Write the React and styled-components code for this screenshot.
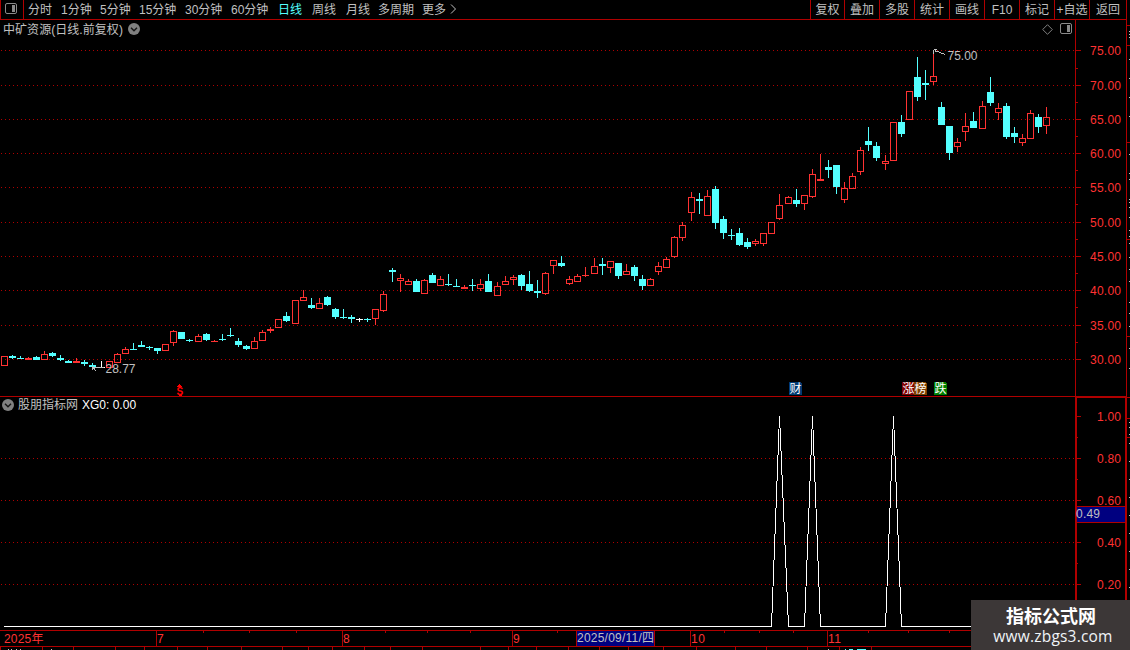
import React from 'react';
import styled, { createGlobalStyle } from 'styled-components';

const LINE = '#b00000';
const RED = '#ff3232';
const CYAN = '#54ffff';
const GREY = '#c0c0c0';
const FONT = '"Liberation Sans", "Noto Sans CJK SC", sans-serif';

const GlobalStyle = createGlobalStyle`
  * {
    box-sizing: border-box;
  }
  body {
    margin: 0;
    background: #000;
    overflow: hidden;
  }
`;

const Screen = styled.div`
  position: relative;
  display: flex;
  width: 1130px;
  height: 650px;
  background: #000;
  color: ${GREY};
  font-family: ${FONT};
  font-size: 12px;
  line-height: 18px;
  white-space: nowrap;
  overflow: hidden;
  svg {
    display: block;
    flex: none;
  }
`;
const Workspace = styled.div`
  display: flex;
  flex-direction: column;
  width: 1127px;
  border-right: 1px solid ${LINE};
`;
const TopBar = styled.div`
  display: flex;
  height: 20px;
  border-left: 1px solid ${LINE};
  border-bottom: 1px solid ${LINE};
`;
const PanelToggle = styled.div`
  width: 23px;
  padding: 3px 0 0 4px;
  border-right: 1px solid ${LINE};
`;
const Periods = styled.div`
  display: flex;
  flex: 1;
  padding: 1px 0 0 4px;
`;
const Period = styled.div`
  width: ${props => props.$width}px;
  color: ${props => (props.$active ? CYAN : GREY)};
`;
const Tools = styled.div`
  display: flex;
`;
const Tool = styled.div`
  width: ${props => props.$width}px;
  padding-top: 1px;
  border-left: 1px solid ${LINE};
  text-align: center;
`;
const Pane = styled.div`
  display: flex;
  height: ${props => props.$height}px;
`;
const Plot = styled.div`
  width: 1075px;
`;
const PaneHeader = styled.div`
  display: flex;
  align-items: center;
  height: 18px;
  padding: 0 3px ${props => props.$bottom || 0}px ${props => props.$left}px;
  gap: ${props => props.$gap}px;
`;
const StockName = styled.span`
  padding-top: 2px;
  letter-spacing: 0.05px;
`;
const HeaderIcons = styled.div`
  display: flex;
  align-items: center;
  gap: 7px;
  margin-left: auto;
`;
const Indicator = styled(Pane)`
  border-top: 1px solid ${LINE};
`;
const Value = styled.span`
  color: #fff;
`;
const Watermark = styled.div`
  position: absolute;
  right: 0;
  bottom: 0;
  width: 159px;
  height: 50px;
  padding-top: 4px;
  background: #3c3737;
  color: #fff;
  text-align: center;
`;
const SiteName = styled.div`
  padding-left: 1px;
  font: bold 18px/22px "Noto Sans CJK SC", sans-serif;
`;
const SiteUrl = styled.div`
  padding-left: 5px;
  color: #f0f4f8;
  font: 15.5px/20px "Open Sans", sans-serif;
  letter-spacing: 0.2px;
`;

const periods = [
  ['分时', 33], ['1分钟', 39], ['5分钟', 39], ['15分钟', 46], ['30分钟', 46],
  ['60分钟', 47], ['日线', 34], ['周线', 34], ['月线', 32], ['多周期', 44], ['更多', 28],
];
const tools = [
  ['复权', 34], ['叠加', 35], ['多股', 35], ['统计', 35], ['画线', 35],
  ['F10', 35], ['标记', 35], ['+自选', 35], ['返回', 37],
];

// x, high, body top, body bottom, low, type
// r: hollow red, f: filled red, c: filled cyan, w: white
const candles = [
  [4, 356, 356, 366, 366, 'r'], [12, 355, 356, 358, 359, 'c'], [20, 356, 358, 359, 359, 'c'],
  [28, 357, 358, 360, 360, 'f'], [36, 356, 357, 360, 360, 'c'], [44, 351, 354, 360, 360, 'r'],
  [52, 352, 353, 356, 357, 'c'], [60, 355, 358, 360, 361, 'c'], [68, 360, 361, 363, 363, 'c'],
  [76, 358, 361, 363, 363, 'f'], [84, 360, 362, 364, 366, 'c'], [92, 363, 365, 367, 370, 'c'],
  [101, 361, 367, 368, 368, 'w'], [109, 361, 361, 368, 368, 'r'], [117, 353, 354, 363, 363, 'r'],
  [125, 347, 349, 354, 354, 'r'], [133, 343, 349, 350, 350, 'c'], [141, 341, 345, 347, 347, 'c'],
  [149, 346, 347, 348, 350, 'c'], [157, 348, 348, 351, 354, 'c'], [165, 344, 344, 351, 351, 'r'],
  [173, 330, 331, 343, 346, 'r'], [181, 332, 332, 339, 339, 'c'], [189, 339, 340, 341, 342, 'c'],
  [198, 334, 336, 342, 342, 'r'], [206, 333, 334, 340, 341, 'c'], [214, 340, 341, 342, 342, 'f'],
  [222, 334, 339, 340, 341, 'c'], [230, 328, 335, 336, 337, 'c'], [238, 338, 341, 345, 347, 'c'],
  [246, 345, 346, 349, 350, 'c'], [254, 337, 341, 349, 349, 'r'], [262, 330, 332, 341, 341, 'r'],
  [270, 327, 329, 331, 333, 'f'], [278, 319, 319, 328, 328, 'r'], [286, 312, 316, 321, 322, 'c'],
  [295, 300, 300, 324, 324, 'r'], [303, 290, 297, 301, 301, 'r'], [311, 298, 305, 308, 309, 'c'],
  [319, 298, 303, 309, 309, 'r'], [327, 296, 297, 305, 306, 'c'], [335, 308, 309, 317, 319, 'c'],
  [343, 309, 317, 318, 319, 'c'], [351, 315, 317, 319, 323, 'c'], [359, 318, 319, 320, 322, 'w'],
  [367, 318, 319, 320, 322, 'c'], [375, 309, 309, 319, 325, 'r'], [383, 291, 294, 311, 312, 'r'],
  [392, 268, 270, 272, 282, 'c'], [400, 274, 278, 281, 292, 'r'], [408, 279, 281, 285, 285, 'r'],
  [416, 279, 281, 292, 292, 'c'], [424, 279, 280, 294, 294, 'r'], [432, 273, 275, 283, 283, 'c'],
  [440, 276, 279, 286, 286, 'r'], [448, 274, 284, 285, 286, 'c'], [456, 279, 286, 287, 287, 'c'],
  [464, 285, 287, 289, 289, 'f'], [472, 279, 285, 286, 291, 'c'], [480, 279, 284, 289, 291, 'r'],
  [488, 274, 281, 292, 292, 'c'], [497, 282, 286, 296, 296, 'r'], [505, 276, 281, 285, 285, 'r'],
  [513, 275, 277, 280, 285, 'r'], [521, 274, 275, 286, 290, 'c'], [529, 271, 284, 291, 292, 'c'],
  [537, 280, 291, 293, 298, 'c'], [545, 272, 273, 294, 295, 'r'], [553, 260, 260, 266, 274, 'r'],
  [561, 256, 263, 266, 267, 'c'], [569, 276, 279, 284, 285, 'r'], [577, 274, 276, 282, 282, 'r'],
  [585, 267, 275, 276, 277, 'f'], [594, 258, 266, 274, 274, 'r'], [602, 258, 264, 266, 275, 'c'],
  [610, 261, 261, 268, 273, 'r'], [618, 263, 263, 276, 279, 'c'], [626, 264, 271, 275, 275, 'r'],
  [634, 265, 267, 276, 281, 'c'], [642, 275, 279, 286, 290, 'c'], [650, 278, 279, 286, 286, 'r'],
  [658, 262, 266, 272, 275, 'r'], [666, 257, 259, 268, 268, 'r'], [674, 236, 237, 257, 258, 'r'],
  [682, 222, 225, 238, 241, 'r'], [691, 192, 197, 213, 221, 'r'], [699, 193, 199, 201, 214, 'c'],
  [707, 190, 196, 216, 216, 'r'], [715, 186, 189, 223, 229, 'c'], [723, 216, 219, 233, 239, 'c'],
  [731, 229, 235, 236, 240, 'c'], [739, 228, 233, 245, 246, 'c'], [747, 238, 242, 247, 249, 'c'],
  [755, 239, 241, 244, 246, 'r'], [763, 233, 233, 244, 246, 'r'], [771, 222, 222, 234, 234, 'r'],
  [779, 194, 205, 219, 220, 'r'], [788, 196, 197, 204, 204, 'r'], [796, 189, 200, 204, 207, 'c'],
  [804, 195, 195, 204, 210, 'r'], [812, 169, 174, 197, 198, 'r'], [820, 154, 179, 181, 181, 'f'],
  [828, 160, 167, 170, 178, 'c'], [836, 165, 165, 187, 194, 'c'], [844, 182, 188, 200, 203, 'r'],
  [852, 173, 176, 189, 189, 'r'], [860, 147, 150, 172, 175, 'r'], [868, 127, 141, 145, 151, 'c'],
  [876, 142, 146, 158, 161, 'c'], [885, 155, 161, 164, 170, 'r'], [893, 122, 122, 161, 161, 'r'],
  [901, 115, 122, 134, 137, 'c'], [909, 91, 91, 120, 120, 'r'], [917, 57, 77, 97, 101, 'c'],
  [925, 70, 83, 85, 100, 'c'], [933, 50, 76, 82, 85, 'r'], [941, 102, 107, 125, 125, 'c'],
  [949, 126, 126, 153, 160, 'c'], [957, 138, 142, 147, 152, 'r'], [965, 113, 126, 132, 141, 'r'],
  [973, 112, 121, 128, 128, 'c'], [982, 101, 106, 129, 129, 'r'], [990, 77, 92, 103, 106, 'c'],
  [998, 103, 108, 113, 120, 'r'], [1006, 103, 106, 137, 139, 'c'], [1014, 127, 133, 137, 143, 'c'],
  [1022, 134, 138, 143, 146, 'r'], [1030, 110, 113, 139, 139, 'r'], [1038, 114, 117, 127, 133, 'c'],
  [1046, 107, 117, 126, 134, 'r'],
];

const priceTicks = [
  ['75.00', 50], ['70.00', 85], ['65.00', 119], ['60.00', 153], ['55.00', 187],
  ['50.00', 222], ['45.00', 256], ['40.00', 290], ['35.00', 325], ['30.00', 359],
];
const valueTicks = [['1.00', 416], ['0.80', 458], ['0.60', 500], ['0.40', 542], ['0.20', 584]];
const badges = [
  ['财', 789, '#003a72'], ['涨', 902, '#800000'], ['榜', 914, '#804000'], ['跌', 934, '#008000'],
];
const months = [['7', 156], ['8', 342], ['9', 512], ['10', 690], ['11', 827]];
const weekTicks = [203, 249, 296, 385, 427, 470, 557, 724, 759, 793, 868, 908, 949];
const statusCells = [
  0, 42, 73, 115, 144, 177, 207, 241, 282, 308, 332, 364, 390, 422, 480, 508, 536, 568,
  599, 628, 663, 696, 735, 766, 807, 839, 871,
];
const edgeRed = [25, 45, 142, 239, 336, 397, 418, 437];
const edgeWhite = [
  31, 34, 37, 59, 78, 97, 116, 154, 173, 179, 199, 202, 207, 217, 230, 236, 243, 257, 269,
  281, 302, 313, 326, 348, 368, 422, 427, 434, 443, 461, 479, 497, 515, 533, 551, 569, 587,
];

const ToggleIcon = () => (
  <svg width="12" height="12" viewBox="0 0 12 12">
    <rect x="0.5" y="0.5" width="11" height="10" rx="1.5" fill="none" stroke="#8a8a8a" />
    <rect x="7" y="2" width="3" height="7" fill="#8a8a8a" />
  </svg>
);

const DropIcon = () => (
  <svg width="12" height="12" viewBox="0 0 12 12">
    <circle cx="6" cy="6" r="6" fill="#808080" />
    <path d="M3 4.7 L6 7.7 L9 4.7" fill="none" stroke="#141414" strokeWidth="1.4" />
  </svg>
);

const GridLine = ({ y }) => (
  <path d={`M1 ${y + 0.5}H1075`} stroke={LINE} strokeDasharray="1 3" />
);

const Candle = ({ data }) => {
  const [x, high, top, bottom, low, type] = data;
  const color = type === 'c' ? CYAN : type === 'w' ? '#fff' : RED;
  const hollow = type === 'r';
  return (
    <g>
      <rect x={x} y={high} width="1" height={top - high} fill={color} />
      <rect x={x} y={bottom} width="1" height={low - bottom} fill={color} />
      {hollow
        ? <rect x={x - 2.5} y={top + 0.5} width="6" height={bottom - top - 1} fill="none" stroke={color} />
        : <rect x={x - 3} y={top} width="7" height={bottom - top} fill={color} />}
    </g>
  );
};

const PricePlot = () => (
  <svg width="1075" height="358" viewBox="0 38 1075 358" shapeRendering="crispEdges">
    {priceTicks.map(([label, y]) => <GridLine key={label} y={y} />)}
    {candles.map(c => <Candle key={c[0]} data={c} />)}
    <g fill="none" stroke={GREY}>
      <path d="M92 367.5H104M92.5 366V370M93 368.5H95M94.5 369V370M95.5 370V371" />
      <path d="M934 49.5H937M933.5 50V54M935 50.5L945 54.5M934.5 51.5H937" />
    </g>
    <g fill={GREY} fontSize="12">
      <text x="105.5" y="373" textLength="30">28.77</text>
      <text x="947.5" y="60" textLength="30">75.00</text>
    </g>
    <g fill="#f00">
      <path d="M179 384h1v1h1v1h1v1h-5v-1h1v-1h1z" />
      <text x="176.5" y="395" fontSize="10" fontWeight="bold">S</text>
      <rect x="179" y="387" width="2" height="1" />
      <rect x="179" y="395" width="3" height="1" />
    </g>
    {badges.map(([label, x, color]) => (
      <g key={label}>
        <path d={`M${x} 382h11l2 2v11h-13z`} fill={color} />
        <text x={x + 0.5} y="393" fontSize="12" fill="#fff">{label}</text>
      </g>
    ))}
  </svg>
);

const PriceAxis = () => (
  <svg width="51" height="376" viewBox="1075 20 51 376" shapeRendering="crispEdges">
    <rect x="1075" y="20" width="1" height="376" fill={LINE} />
    {priceTicks.map(([label, y], i) => (
      <g key={label}>
        <rect x="1076" y={y} width="5" height="1" fill={LINE} />
        {i < 9 && <rect x="1076" y={y + (i === 0 ? 18 : 17)} width="2" height="1" fill={LINE} />}
        <text x="1090" y={y + 5} fontSize="12" fill={RED} textLength="31">{label}</text>
      </g>
    ))}
  </svg>
);

const SignalPlot = () => (
  <svg width="1075" height="215" viewBox="0 415 1075 215" shapeRendering="crispEdges">
    {valueTicks.slice(1).map(([label, y]) => <GridLine key={label} y={y} />)}
    <path
      d="M4 626.5H771.5L779.5 416L788.5 626.5H804.5L812.5 416L820.5 626.5H885.5L893.5 416L901.5 626.5H1047"
      fill="none"
      stroke="#fff"
    />
  </svg>
);

const SignalAxis = () => (
  <svg width="51" height="233" viewBox="1075 397 51 233" shapeRendering="crispEdges">
    <path d="M1075 397h51v233h-1v-232h-48v232h-2z" fill={LINE} />
    {valueTicks.map(([label, y]) => (
      <g key={label}>
        <rect x="1077" y={y} width="4" height="1" fill={LINE} />
        <rect x="1077" y={y + 21} width="1" height="1" fill={LINE} />
        <text x="1097" y={y + 5} fontSize="12" fill={RED} textLength="24">{label}</text>
      </g>
    ))}
    <rect x="1077" y="506" width="48" height="17" fill={LINE} />
    <rect x="1077" y="507" width="48" height="15" fill="#000080" />
    <text x="1076" y="518" fontSize="12" fill={GREY} textLength="24">0.49</text>
  </svg>
);

const TimeAxis = () => (
  <svg width="1126" height="17" viewBox="0 630 1126 17" shapeRendering="crispEdges">
    <rect x="0" y="630" width="1126" height="1" fill={LINE} />
    <rect x="0" y="646" width="1126" height="1" fill={LINE} />
    <text x="4" y="643" fontSize="12" fill={RED} textLength="39.5">2025年</text>
    {weekTicks.map(x => <rect key={x} x={x} y="631" width="1" height="2" fill={LINE} />)}
    {months.map(([label, x]) => (
      <g key={label}>
        <rect x={x} y="631" width="1" height="15" fill={LINE} />
        <text x={x + 1} y="643" fontSize="12" letterSpacing="0.5" fill={RED}>{label}</text>
      </g>
    ))}
    <rect x="576" y="631" width="79" height="15" fill={LINE} />
    <rect x="577" y="631" width="77" height="15" fill="#000080" />
    <text x="577" y="642" fontSize="12" fill={GREY} textLength="77">2025/09/11/四</text>
  </svg>
);

const StatusStrip = () => (
  <svg width="1126" height="3" viewBox="0 647 1126 3" shapeRendering="crispEdges">
    {statusCells.map(x => <rect key={x} x={x} y="647" width="1" height="3" fill={LINE} />)}
    {[8, 11, 16, 20, 51, 828].map(x => <rect key={x} x={x} y="649" width="1" height="1" fill={GREY} />)}
    <path d="M845 649.5h1M849 649.5h4M857 649.5h9" stroke={CYAN} />
  </svg>
);

// Left edge of the neighbouring quote window
const SideEdge = () => (
  <svg width="3" height="650" viewBox="1127 0 3 650" shapeRendering="crispEdges">
    {edgeRed.map(y => <rect key={y} x="1127" y={y} width="3" height="1" fill={LINE} />)}
    {edgeWhite.map(y => <rect key={y} x="1129" y={y} width="1" height="1" fill={GREY} />)}
  </svg>
);

const App = () => (
  <Screen>
    <GlobalStyle />
    <Workspace>
      <TopBar>
        <PanelToggle><ToggleIcon /></PanelToggle>
        <Periods>
          {periods.map(([label, width]) => (
            <Period key={label} $width={width} $active={label === '日线'}>{label}</Period>
          ))}
          <svg width="8" height="18" viewBox="0 0 8 18">
            <path d="M1 3.5L5.5 8L1 12.5" fill="none" stroke={GREY} />
          </svg>
        </Periods>
        <Tools>
          {tools.map(([label, width]) => <Tool key={label} $width={width}>{label}</Tool>)}
        </Tools>
      </TopBar>
      <Pane $height={376}>
        <Plot>
          <PaneHeader $left={3} $gap={5}>
            <StockName>中矿资源(日线.前复权)</StockName>
            <DropIcon />
            <HeaderIcons>
              <svg width="11" height="11" viewBox="0 0 11 11">
                <path d="M5.5 0.7L10.3 5.5L5.5 10.3L0.7 5.5Z" fill="none" stroke="#808080" />
              </svg>
              <ToggleIcon />
            </HeaderIcons>
          </PaneHeader>
          <PricePlot />
        </Plot>
        <PriceAxis />
      </Pane>
      <Indicator $height={234}>
        <Plot>
          <PaneHeader $left={2} $gap={4} $bottom={2}>
            <DropIcon />
            <span>股朋指标网</span>
            <Value>XG0: 0.00</Value>
          </PaneHeader>
          <SignalPlot />
        </Plot>
        <SignalAxis />
      </Indicator>
      <TimeAxis />
      <StatusStrip />
    </Workspace>
    <SideEdge />
    <Watermark>
      <SiteName>指标公式网</SiteName>
      <SiteUrl>www.zbgs3.com</SiteUrl>
    </Watermark>
  </Screen>
);

export default App;
